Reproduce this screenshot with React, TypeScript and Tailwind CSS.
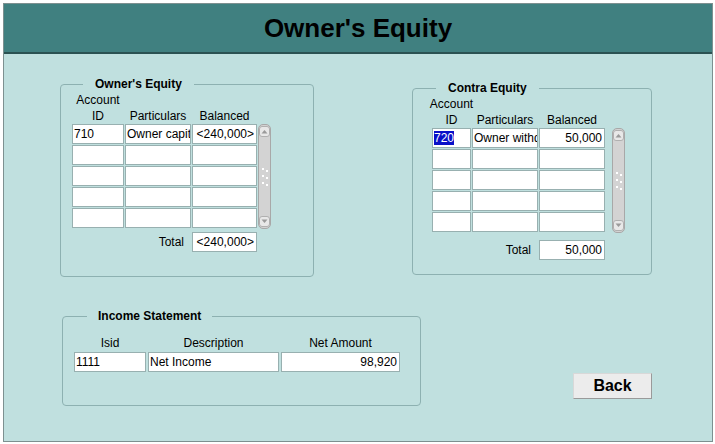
const F = "font-['Liberation_Sans',Arial,sans-serif]";

type FieldProps = { text?: string; right?: boolean; selected?: boolean; w: string };

const Field = ({ text = '', right, selected, w }: FieldProps) => (
  <div
    className={`${w} h-[20px] bg-white border border-[#98b0b0] flex items-center text-[12px] leading-[14px] text-black overflow-hidden whitespace-nowrap ${
      right ? 'justify-end pr-[2px] pl-[1px]' : 'justify-start px-[1px]'
    }`}
  >
    {selected ? <span className="bg-[#0a10c8] text-white">{text}</span> : text}
  </div>
);

const Arrow = ({ up }: { up?: boolean }) => (
  <div className="w-[11px] h-[11px] rounded-[3px] border border-[#b0b0b0] bg-[#e8e8e8] flex items-center justify-center">
    <svg width="7" height="5" viewBox="0 0 7 5">
      {up ? <path d="M0.5 4.5 L3.5 1 L6.5 4.5 Z" fill="#9a9a9a" /> : <path d="M0.5 0.5 L3.5 4 L6.5 0.5 Z" fill="#9a9a9a" />}
    </svg>
  </div>
);

const ScrollBar = () => (
  <div className="w-[13px] h-[105px] rounded-[5px] border border-[#a8a8a8] bg-[#d3d3d3] flex flex-col items-center justify-between py-[1px]">
    <Arrow up />
    <div className="grid grid-cols-2 gap-x-[2px] gap-y-[3px]">
      {[0, 1, 2, 3, 4, 5].map((i) => (
        <div key={i} className={`w-[2px] h-[2px] bg-white ${i % 2 ? 'mt-[2px]' : ''}`} />
      ))}
    </div>
    <Arrow />
  </div>
);

type Row = { id: string; part: string; bal: string; sel?: boolean };

const Ledger = ({
  rows,
  widths,
  gapBar,
  total,
  totalGap,
}: {
  rows: Row[];
  widths: [string, string, string];
  gapBar: string;
  total: string;
  totalGap: string;
}) => (
  <div className="flex items-start">
    <div className="flex flex-col">
      <div className="flex items-end gap-[1px] text-[12px] leading-[16px] text-black">
        <div className={`${widths[0]} flex flex-col items-center whitespace-nowrap`}>
          <span>Account</span>
          <span>ID</span>
        </div>
        <div className={`${widths[1]} text-center`}>Particulars</div>
        <div className={`${widths[2]} text-center`}>Balanced</div>
      </div>
      <div className="flex flex-col gap-[1px]">
        {[0, 1, 2, 3, 4].map((i) => {
          const r = rows[i];
          return (
            <div key={i} className="flex gap-[1px]">
              <Field w={widths[0]} text={r?.id} selected={r?.sel} />
              <Field w={widths[1]} text={r?.part} />
              <Field w={widths[2]} text={r?.bal} right />
            </div>
          );
        })}
      </div>
      <div className={`flex items-center justify-end gap-[8px] ${totalGap}`}>
        <span className="text-[12px] leading-[14px] text-black">Total</span>
        <Field w={widths[2]} text={total} right />
      </div>
    </div>
    <div className={`${gapBar} mt-[32px]`}>
      <ScrollBar />
    </div>
  </div>
);

export default function App() {
  return (
    <div className={`${F} w-[715px] h-[444px] bg-white pt-[3px] pl-[3px]`}>
      <div className="w-[710px] h-[439px] border border-[#7d9090] bg-[#c0e0df] flex flex-col">
        <div className="h-[50px] bg-[#408080] border-b-2 border-[#2b5252] flex items-center justify-center">
          <h1 className="text-[26px] leading-[30px] font-bold text-black">Owner's Equity</h1>
        </div>

        <div className="flex items-start">
          <fieldset className="ml-[56px] mt-[23px] w-[254px] h-[200px] border border-[#8db1b1] rounded-[4px] px-[11px]">
            <legend className="ml-[11px] px-[12px] text-[12px] leading-[14px] font-bold text-black">Owner's Equity</legend>
            <div className="pt-[1px]">
              <Ledger
                rows={[{ id: '710', part: 'Owner capital', bal: '<240,000>' }]}
                widths={['w-[52px]', 'w-[66px]', 'w-[65px]']}
                gapBar="ml-[1px]"
                total="<240,000>"
                totalGap="mt-[4px]"
              />
            </div>
          </fieldset>

          <fieldset className="ml-[98px] mt-[27px] w-[240px] h-[194px] border border-[#8db1b1] rounded-[4px] pl-[19px]">
            <legend className="ml-[4px] px-[12px] text-[12px] leading-[14px] font-bold text-black">Contra Equity</legend>
            <div className="pt-[1px]">
              <Ledger
                rows={[{ id: '720', part: 'Owner withdrawal', bal: '50,000', sel: true }]}
                widths={['w-[39px]', 'w-[66px]', 'w-[66px]']}
                gapBar="ml-[7px]"
                total="50,000"
                totalGap="mt-[8px]"
              />
            </div>
          </fieldset>
        </div>

        <div className="flex items-start">
          <fieldset className="ml-[58px] mt-[32px] w-[359px] h-[97px] border border-[#8db1b1] rounded-[4px] px-[11px]">
            <legend className="ml-[13px] px-[11px] text-[12px] leading-[14px] font-bold text-black">Income Statement</legend>
            <div className="mt-[12px] flex gap-[2px] text-[12px] leading-[16px] text-black mb-[1px]">
              <div className="w-[72px] text-center">Isid</div>
              <div className="w-[131px] text-center">Description</div>
              <div className="w-[119px] text-center">Net Amount</div>
            </div>
            <div className="flex gap-[2px]">
              <Field w="w-[72px]" text="1111" />
              <Field w="w-[131px]" text="Net Income" />
              <Field w="w-[119px]" text="98,920" right />
            </div>
          </fieldset>

          <button className="ml-[152px] mt-[96px] w-[79px] h-[26px] bg-[#ececec] border border-[#d8d8d8] border-b-[#9a9a9a] border-r-[#9a9a9a] text-[16px] leading-[18px] font-bold text-black">
            Back
          </button>
        </div>
      </div>
    </div>
  );
}
